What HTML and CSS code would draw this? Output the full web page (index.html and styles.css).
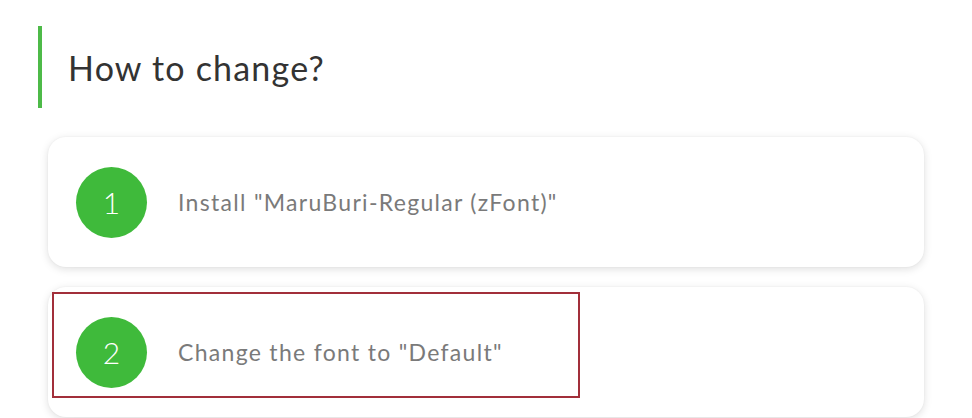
FILE: index.html
```html
<!DOCTYPE html>
<html lang="en">
<head>
<meta charset="utf-8">
<title>How to change?</title>
<link rel="stylesheet" href="styles.css">
</head>
<body>
<main class="page">
  <header class="section-title">
    <h1 class="section-title__text">How to change?</h1>
  </header>
  <ol class="steps">
    <li class="step">
      <span class="step__num">1</span>
      <span class="step__text">Install "MaruBuri-Regular (zFont)"</span>
    </li>
    <li class="step">
      <span class="step__num">2</span>
      <span class="step__text">Change the font to "Default"</span>
      <span class="step__highlight" aria-hidden="true"></span>
    </li>
  </ol>
</main>
</body>
</html>
```

FILE: styles.css
```css
* { box-sizing: border-box; }
html, body { margin: 0; padding: 0; background: #ffffff; }
body {
  font-family: "Lato", "Open Sans", "Liberation Sans", sans-serif;
  width: 972px;
  height: 418px;
  overflow: hidden;
}
.page {
  padding: 26px 48px 0 38px;
}
.section-title {
  border-left: 4px solid #4dba48;
  height: 82px;
  display: flex;
  align-items: center;
  padding-left: 26px;
}
.section-title__text {
  margin: 0;
  font-size: 34px;
  font-weight: 400;
  color: #333333;
  letter-spacing: 1.2px;
}
.steps {
  list-style: none;
  margin: 29px 0 0 10px;
  padding: 0;
  display: flex;
  flex-direction: column;
  gap: 20px;
}
.step {
  position: relative;
  height: 130px;
  background: #ffffff;
  border-radius: 18px;
  box-shadow: 0 2px 8px rgba(0, 0, 0, 0.13), 0 0 2px rgba(0,0,0,0.05);
  display: flex;
  align-items: center;
  padding-left: 28px;
}
.step__num {
  width: 71px;
  height: 71px;
  border-radius: 50%;
  background: #3fba3b;
  color: #ffffff;
  display: flex;
  align-items: center;
  justify-content: center;
  font-size: 30px;
  font-weight: 300;
  flex: none;
}
.step__text {
  margin-left: 31px;
  font-size: 23px;
  color: #7a7a7a;
  letter-spacing: 1.3px;
}
.step__highlight {
  position: absolute;
  left: 4px;
  top: 5px;
  width: 528px;
  height: 106px;
  border: 2px solid #a22f3a;
  pointer-events: none;
}
```
